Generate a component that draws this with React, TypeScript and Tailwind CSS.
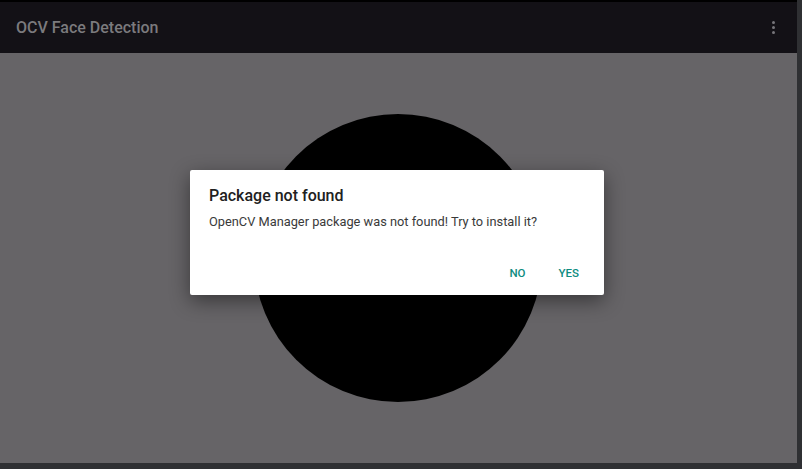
import React from 'react';

const App: React.FC = () => {
  return (
    <div className="w-[802px] h-[469px] bg-[#2f3033] flex flex-col overflow-hidden" style={{ fontFamily: 'Roboto, "Noto Sans", sans-serif' }}>
      <div className="h-[2px] w-[797px] bg-black" />
      <div className="flex flex-1 w-[797px] flex-col pb-[6px]">
        {/* app bar */}
        <div className="h-[51px] bg-[#131116] flex items-center justify-between pl-4 pr-[22px]">
          <span className="text-[16px] font-medium text-[#7b7a7d] leading-none">OCV Face Detection</span>
          <div className="flex flex-col gap-[2px]">
            <span className="w-[3px] h-[3px] rounded-full bg-[#77767a]" />
            <span className="w-[3px] h-[3px] rounded-full bg-[#77767a]" />
            <span className="w-[3px] h-[3px] rounded-full bg-[#77767a]" />
          </div>
        </div>

        {/* camera area */}
        <div className="relative flex-1 bg-[#666467]">
          <div className="absolute left-[254px] top-[61px] w-[288px] h-[288px] rounded-full bg-black" />

          {/* dialog */}
          <div className="absolute left-[190px] top-[117px] w-[414px] h-[125px] bg-white rounded-[2px] shadow-[0_6px_20px_rgba(0,0,0,0.45)] flex flex-col">
            <div className="pl-[19px] pt-[15px] text-[16px] font-medium text-[#212121] leading-[22px]">Package not found</div>
            <div className="pl-[19px] pt-[6px] text-[12.8px] text-[#3a3a3a] leading-[18px]">
              OpenCV Manager package was not found! Try to install it?
            </div>
            <div className="flex-1 flex items-end justify-end gap-[33px] pr-[25px] pb-[13px]">
              <span className="text-[11.5px] font-medium text-[#0e8c7f]">NO</span>
              <span className="text-[11.5px] font-medium text-[#0e8c7f]">YES</span>
            </div>
          </div>
        </div>
      </div>
    </div>
  );
};

export default App;
